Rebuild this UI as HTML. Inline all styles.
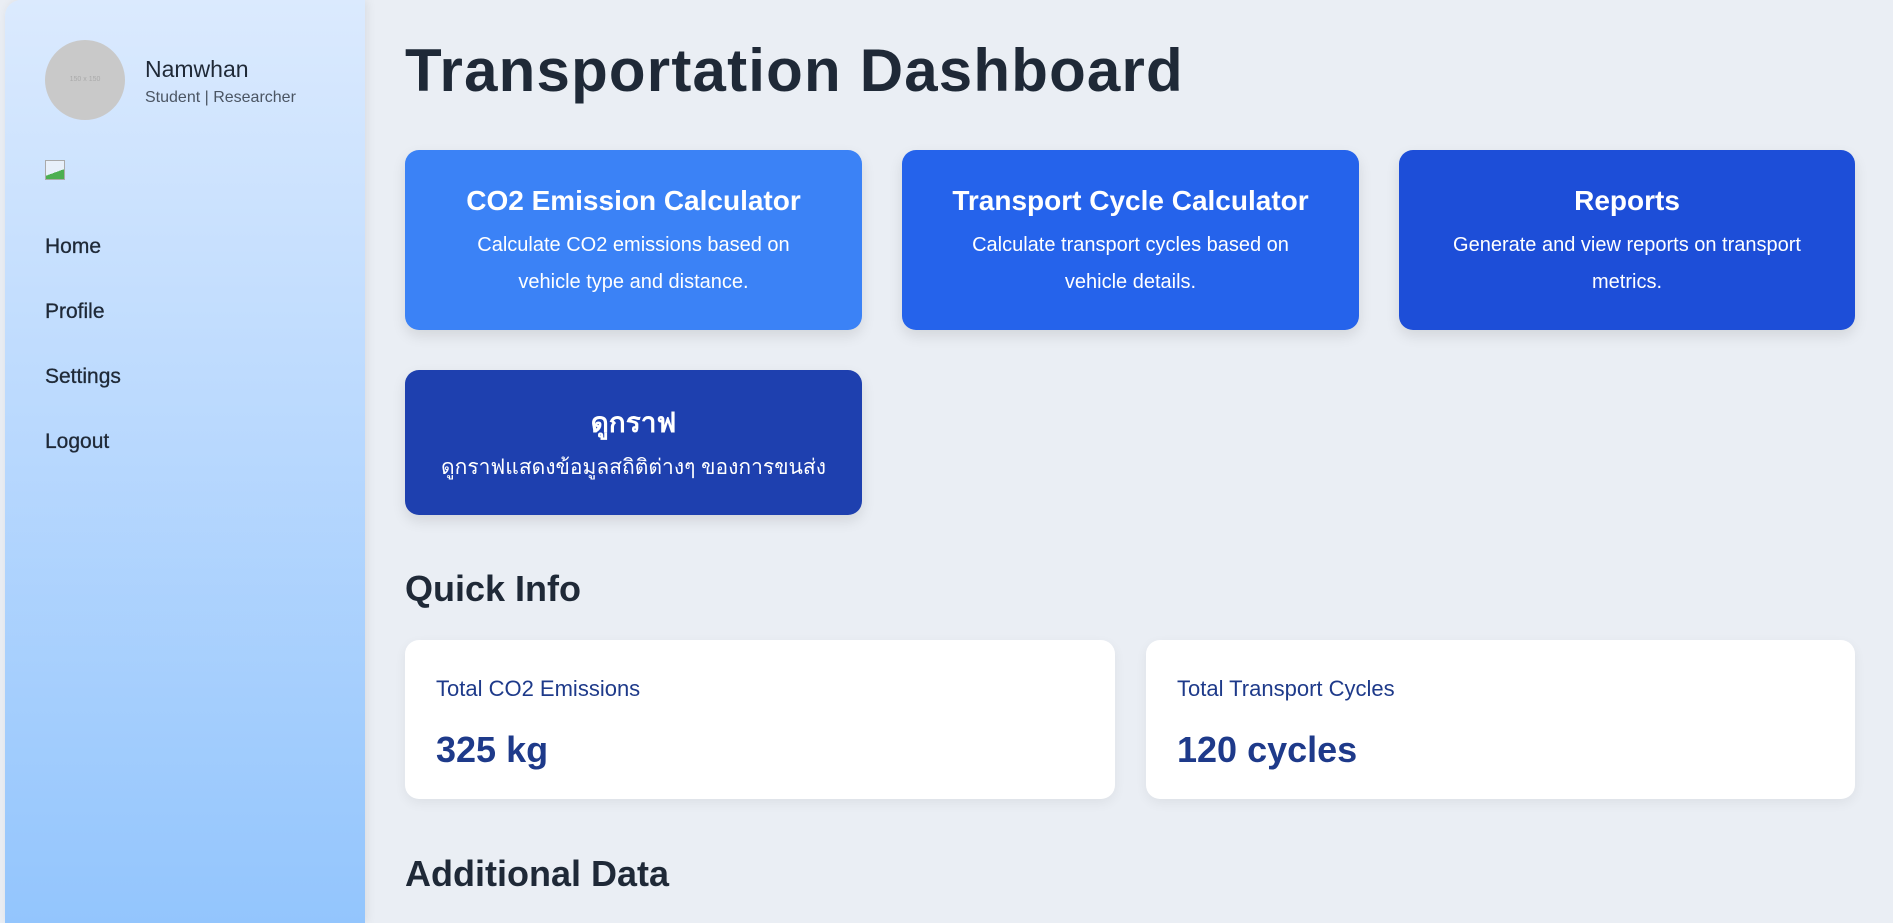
<!DOCTYPE html>
<html><head><meta charset="utf-8"><style>
*{box-sizing:border-box;margin:0;padding:0}
body{width:1893px;height:923px;overflow:hidden;background:#eaeef4;font-family:"Liberation Sans","DejaVu Sans",sans-serif;color:#1f2937;position:relative}
.side{position:absolute;left:5px;top:0;width:360px;height:923px;background:linear-gradient(#dbeafe,#93c5fd);border-radius:16px 0 0 0;box-shadow:2px 0 10px rgba(0,0,0,.08)}
.av{position:absolute;left:40px;top:40px;width:80px;height:80px;border-radius:50%;background:#c9c9c9;color:#aaa;font-size:7px;text-align:center;line-height:80px}
.name{position:absolute;left:140px;top:56px;font-size:23px;color:#1f2937}
.role{position:absolute;left:140px;top:89px;font-size:16px;color:#4b5563}
.img{position:absolute;left:40px;top:160px;width:20px;height:20px;border:1px solid #aaa;background:linear-gradient(160deg,#e8f0fa 60%,#4caf50 60%)}
.nav{position:absolute;left:40px;font-size:21px;color:#1f2937;-webkit-text-stroke:0.3px #1f2937}
h1{position:absolute;left:405px;top:36px;font-size:60px;font-weight:bold;color:#1f2937;letter-spacing:1.2px}
.card{position:absolute;border-radius:14px;color:#fff;text-align:center;box-shadow:0 6px 14px rgba(0,0,0,.1)}
.card h3{font-size:28px;font-weight:bold;margin-top:35px;margin-bottom:10px}
.card p{font-size:20px;line-height:37px;padding:0 50px}
h2{position:absolute;left:405px;font-size:36px;font-weight:bold;color:#1f2937}
.info{position:absolute;top:640px;height:159px;background:#fff;border-radius:14px;box-shadow:0 4px 12px rgba(0,0,0,.06);color:#1e3a8a}
.info .l{position:absolute;left:31px;top:36px;font-size:22px}
.info .v{position:absolute;left:31px;top:89px;font-size:36px;font-weight:bold}
</style></head><body>
<div class="side">
<div class="av">150 x 150</div>
<div class="name">Namwhan</div>
<div class="role">Student | Researcher</div>
<div class="img"></div>
<div class="nav" style="top:235px">Home</div>
<div class="nav" style="top:300px">Profile</div>
<div class="nav" style="top:365px">Settings</div>
<div class="nav" style="top:430px">Logout</div>
</div>
<h1>Transportation Dashboard</h1>
<div class="card" style="left:405px;top:150px;width:457px;height:180px;background:#3b82f6"><h3>CO2 Emission Calculator</h3><p>Calculate CO2 emissions based on vehicle type and distance.</p></div>
<div class="card" style="left:902px;top:150px;width:457px;height:180px;background:#2563eb"><h3>Transport Cycle Calculator</h3><p>Calculate transport cycles based on vehicle details.</p></div>
<div class="card" style="left:1399px;top:150px;width:456px;height:180px;background:#1d4ed8"><h3>Reports</h3><p>Generate and view reports on transport metrics.</p></div>
<div class="card" style="left:405px;top:370px;width:457px;height:145px;background:#1e40af"><h3 style="margin-top:31px;margin-bottom:4px">ดูกราฟ</h3><p style="padding:0 10px;white-space:nowrap;font-size:21px">ดูกราฟแสดงข้อมูลสถิติต่างๆ ของการขนส่ง</p></div>
<h2 style="top:568px">Quick Info</h2>
<div class="info" style="left:405px;width:710px"><div class="l">Total CO2 Emissions</div><div class="v">325 kg</div></div>
<div class="info" style="left:1146px;width:709px"><div class="l">Total Transport Cycles</div><div class="v">120 cycles</div></div>
<h2 style="top:853px">Additional Data</h2>
</body></html>
